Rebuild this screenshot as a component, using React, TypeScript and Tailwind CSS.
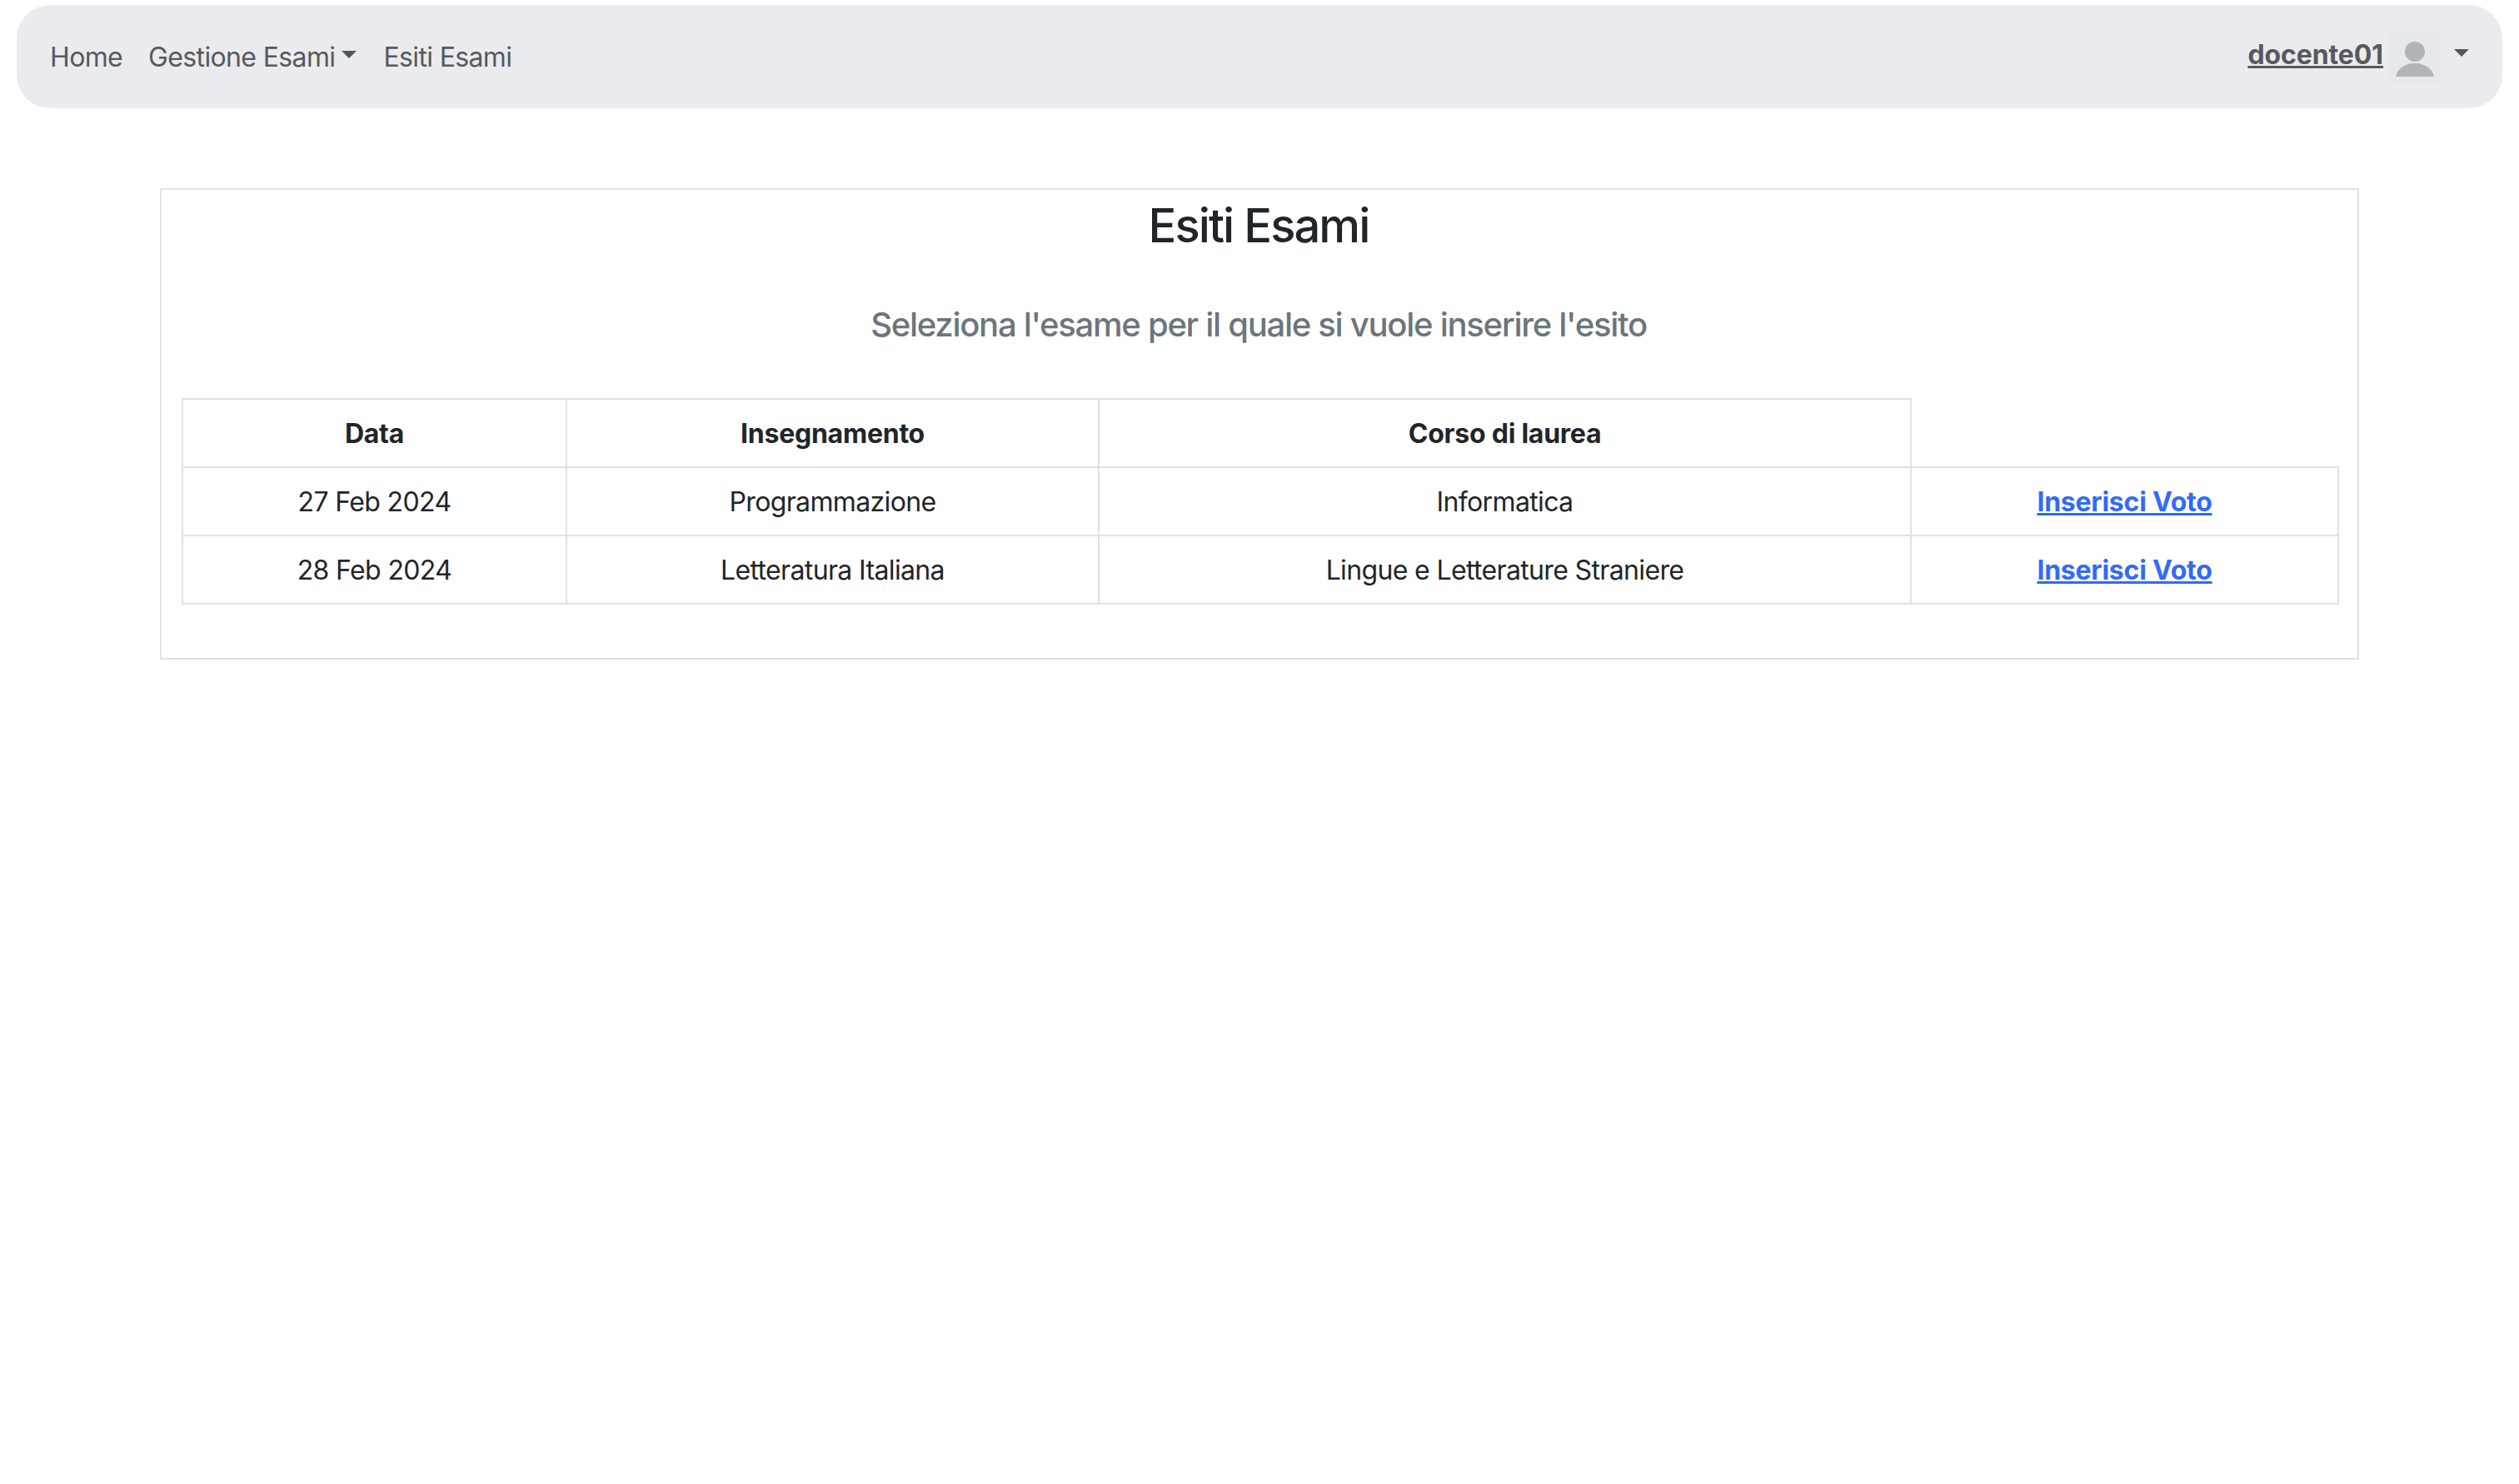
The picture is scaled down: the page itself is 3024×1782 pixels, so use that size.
const rows = [
  { data: "27 Feb 2024", insegnamento: "Programmazione", corso: "Informatica" },
  { data: "28 Feb 2024", insegnamento: "Letteratura Italiana", corso: "Lingue e Letterature Straniere" },
];

function Caret() {
  return <span className="inline-block h-0 w-0 border-x-[9px] border-t-[9px] border-x-transparent border-t-[#555658]" />;
}

function Avatar() {
  return (
    <svg width="60" height="60" viewBox="0 0 60 60" className="shrink-0">
      <rect width="60" height="60" fill="#e6e8e9" />
      <circle cx="30" cy="24" r="12" fill="#afb5b8" />
      <path d="M7 54 C9 44 19 38 30 38 C41 38 51 44 53 54 Z" fill="#afb5b8" />
    </svg>
  );
}

export default function App() {
  return (
    <div className="min-h-[1782px] bg-white pt-[6px] font-['Inter',sans-serif] text-[32px] leading-[48px] tracking-[-0.64px] text-[#212529]">
      <nav className="mx-[20px] flex h-[124px] items-center justify-between rounded-[40px] bg-[#eaebef] pl-[24px] pr-[40px] text-[#58595b]">
        <ul className="mt-[2px] flex items-center">
          <li className="px-[16px]">Home</li>
          <li className="flex items-center gap-[8px] pl-[15px] pr-[16px]">
            Gestione Esami
            <span className="mb-[8px] flex"><Caret /></span>
          </li>
          <li className="px-[16px]">Esiti Esami</li>
        </ul>
        <div className="flex items-center">
          <a href="#" className="mb-[4px] font-bold tracking-[-0.1px] underline">docente01</a>
          <span className="ml-[8px]"><Avatar /></span>
          <span className="mb-[10px] ml-[17px] flex"><Caret /></span>
        </div>
      </nav>

      <main className="mx-[192px] mt-[96px] h-[566px] border-2 border-[#dee2e6] px-[24px]">
        <h3 className="mt-[10px] pr-[2px] text-center text-[56px] font-medium leading-[67px] tracking-[-1.9px]">Esiti Esami</h3>
        <h5 className="mt-[61px] pr-[2px] text-center text-[40px] font-medium leading-[48px] tracking-[-1.27px] text-[#6c757d]">
          Seleziona l'esame per il quale si vuole inserire l'esito
        </h5>
        <table className="mt-[64px] w-[2588px] table-fixed border-collapse text-center">
          <colgroup>
            <col className="w-[461px]" />
            <col className="w-[639px]" />
            <col className="w-[975px]" />
            <col className="w-[513px]" />
          </colgroup>
          <thead>
            <tr>
              <th className="h-[82px] border-2 border-[#dee2e6] pt-[2px] font-bold tracking-[-0.25px]">Data</th>
              <th className="border-2 border-[#dee2e6] pt-[2px] font-bold tracking-[-0.25px]">Insegnamento</th>
              <th className="border-2 border-[#dee2e6] pt-[2px] font-bold tracking-[-0.25px]">Corso di laurea</th>
              <th />
            </tr>
          </thead>
          <tbody>
            {rows.map((row) => (
              <tr key={row.data}>
                <td className="h-[82px] border-2 border-[#dee2e6] pt-[2px]">{row.data}</td>
                <td className="border-2 border-[#dee2e6] pt-[2px]">{row.insegnamento}</td>
                <td className="border-2 border-[#dee2e6] pt-[2px]">{row.corso}</td>
                <td className="border-2 border-[#dee2e6] pt-[2px]">
                  <a href="#" className="font-bold tracking-[-0.23px] text-[#316bf5] underline">Inserisci Voto</a>
                </td>
              </tr>
            ))}
          </tbody>
        </table>
      </main>
    </div>
  );
}
